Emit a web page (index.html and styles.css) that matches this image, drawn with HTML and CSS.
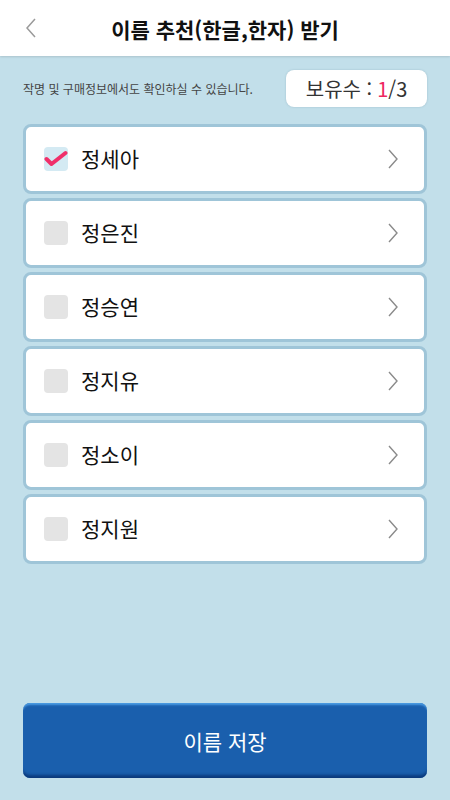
FILE: index.html
```html
<!DOCTYPE html>
<html lang="ko">
<head>
  <meta charset="UTF-8">
  <meta name="viewport" content="width=device-width, initial-scale=1.0">
  <title>이름 추천 받기</title>
  <link rel="stylesheet" href="styles.css">
</head>
<body>

<div class="page">
  <header class="topbar">
    <button class="back" aria-label="뒤로">
      <svg width="10" height="20" viewBox="0 0 10 20"><path d="M9 1 L1 10 L9 19" fill="none" stroke="#9a9a9a" stroke-width="1.5"/></svg>
    </button>
    <h1 class="title">이름 추천(한글,한자) 받기</h1>
  </header>

  <div class="notice">
    <p class="notice-text">작명 및 구매정보에서도 확인하실 수 있습니다.</p>
    <div class="count">보유수 : <span class="count-now">1</span>/3</div>
  </div>

  <ul class="name-list">
    <li class="name-item">
      <span class="check checked">
        <svg width="24" height="24" viewBox="0 0 24 24"><path d="M2.5 12 L7.5 17 L21.5 6" fill="none" stroke="#f0306a" stroke-width="4" stroke-linecap="round" stroke-linejoin="round"/></svg>
      </span>
      <span class="name">정세아</span>
      <svg class="arrow" width="10" height="20" viewBox="0 0 10 20"><path d="M1 1 L9 10 L1 19" fill="none" stroke="#8a8a8a" stroke-width="1.4"/></svg>
    </li>
    <li class="name-item">
      <span class="check"></span>
      <span class="name">정은진</span>
      <svg class="arrow" width="10" height="20" viewBox="0 0 10 20"><path d="M1 1 L9 10 L1 19" fill="none" stroke="#8a8a8a" stroke-width="1.4"/></svg>
    </li>
    <li class="name-item">
      <span class="check"></span>
      <span class="name">정승연</span>
      <svg class="arrow" width="10" height="20" viewBox="0 0 10 20"><path d="M1 1 L9 10 L1 19" fill="none" stroke="#8a8a8a" stroke-width="1.4"/></svg>
    </li>
    <li class="name-item">
      <span class="check"></span>
      <span class="name">정지유</span>
      <svg class="arrow" width="10" height="20" viewBox="0 0 10 20"><path d="M1 1 L9 10 L1 19" fill="none" stroke="#8a8a8a" stroke-width="1.4"/></svg>
    </li>
    <li class="name-item">
      <span class="check"></span>
      <span class="name">정소이</span>
      <svg class="arrow" width="10" height="20" viewBox="0 0 10 20"><path d="M1 1 L9 10 L1 19" fill="none" stroke="#8a8a8a" stroke-width="1.4"/></svg>
    </li>
    <li class="name-item">
      <span class="check"></span>
      <span class="name">정지원</span>
      <svg class="arrow" width="10" height="20" viewBox="0 0 10 20"><path d="M1 1 L9 10 L1 19" fill="none" stroke="#8a8a8a" stroke-width="1.4"/></svg>
    </li>
  </ul>

  <button class="save">이름 저장</button>
</div>

</body>
</html>
```

FILE: styles.css
```css
* {
  box-sizing: border-box;
}
body {
  margin: 0;
  background-color: #c2dfea;
  font-family: "Noto Sans CJK KR", "Noto Sans", sans-serif;
  color: #111;
}
.page {
  display: flex;
  flex-direction: column;
  min-height: 800px;
}
.topbar {
  height: 56px;
  background: #fff;
  display: flex;
  align-items: center;
  justify-content: center;
  position: relative;
  box-shadow: 0 1px 2px rgba(0, 0, 0, 0.12);
}
.back {
  position: absolute;
  left: 22px;
  top: 18px;
  padding: 0 4px;
  border: none;
  background: none;
  line-height: 0;
}
.title {
  margin: 0;
  font-size: 21px;
  font-weight: 700;
  padding-top: 2px;
}
.notice {
  display: flex;
  align-items: center;
  justify-content: space-between;
  padding: 14px 23px 0 23px;
}
.notice-text {
  margin: 0;
  font-size: 12px;
  color: #444;
}
.count {
  width: 141px;
  height: 37px;
  background: #fff;
  border-radius: 8px;
  box-shadow: 0 0 2px rgba(80, 120, 140, 0.35);
  display: flex;
  align-items: center;
  justify-content: center;
  font-size: 20px;
  color: #333;
}
.count-now {
  color: #ee2760;
  margin-left: 5px;
}
.name-list {
  list-style: none;
  margin: 0;
  padding: 17px 23px 0 23px;
  display: flex;
  flex-direction: column;
  gap: 4px;
}
.name-item {
  height: 70px;
  background: #fff;
  border: 3px solid #9fc5d8;
  border-radius: 8px;
  display: flex;
  align-items: center;
  padding: 0 26px 0 18px;
}
.check {
  width: 24px;
  height: 24px;
  border-radius: 4px;
  background: #e4e4e4;
  margin-right: 13px;
  line-height: 0;
}
.check.checked {
  background: #d4eaf3;
}
.name {
  font-size: 21px;
  flex: 1;
  padding-bottom: 2px;
}
.save {
  margin: auto 23px 22px 23px;
  height: 75px;
  border: none;
  border-radius: 7px;
  background: #1a5fad;
  box-shadow: inset 0 3px 2px -1px #4a9ae2, inset 0 -5px 3px -2px #0b3a7c;
  color: #fff;
  font-family: "Noto Sans CJK KR", "Noto Sans", sans-serif;
  font-size: 21px;
}
```
